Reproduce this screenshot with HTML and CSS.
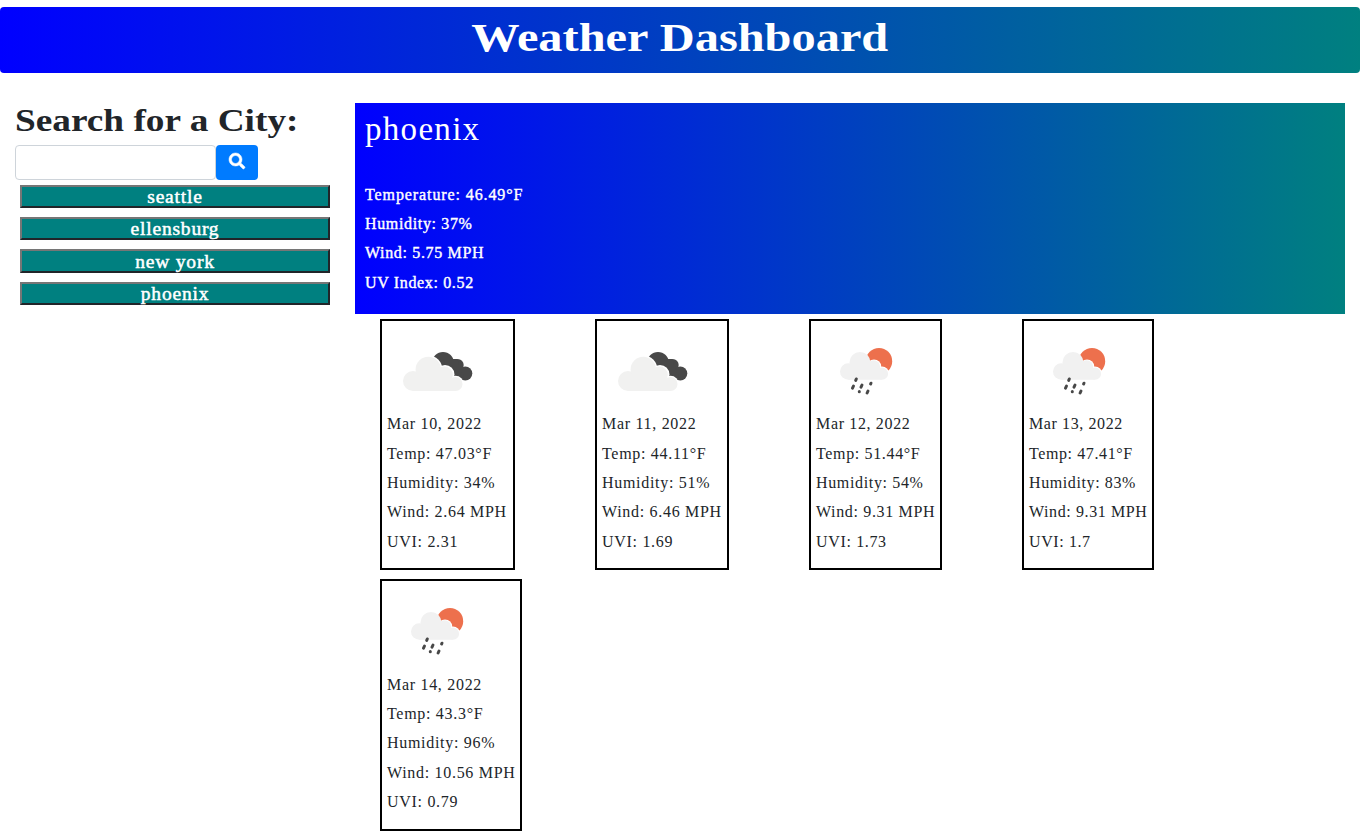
FILE: index.html
```html
<!DOCTYPE html>
<html lang="en">
<head>
<meta charset="utf-8">
<title>Weather Dashboard</title>
<link rel="stylesheet" href="styles.css">
</head>
<body>
<svg class="defs" aria-hidden="true">
  <symbol id="clouds" viewBox="0 0 98 98">
    <g fill="#484848">
      <circle cx="56" cy="39.700" r="10.800"/><circle cx="70.700" cy="42" r="6"/><circle cx="78.300" cy="50.500" r="7"/>
      <path d="M56 36h14l8 21H64z"/>
    </g>
    <g fill="#fff">
      <circle cx="41.300" cy="46.500" r="14"/><circle cx="58" cy="51.500" r="9.500"/><circle cx="68.500" cy="61" r="8.300"/>
    </g>
    <g fill="#f1f1f0">
      <circle cx="26" cy="58" r="10"/><circle cx="41.300" cy="46.500" r="12.700"/><circle cx="57.500" cy="51.800" r="8.300"/><circle cx="68.500" cy="61" r="7"/>
      <path d="M26 68V52l20-6 16 8 6.500 14z"/>
    </g>
  </symbol>
  <symbol id="rain" viewBox="0 0 98 98">
    <circle cx="63" cy="38.200" r="13.200" fill="#ed704d"/>
    <g fill="#fff">
      <circle cx="58" cy="43.700" r="7.300"/><circle cx="66" cy="50.500" r="7"/>
    </g>
    <g fill="#f1f1f1">
      <circle cx="32.300" cy="48.500" r="8.300"/><circle cx="44" cy="39.500" r="10.500"/><circle cx="57.500" cy="43.900" r="6.700"/><circle cx="66" cy="50.700" r="6.100"/>
      <path d="M32.300 56.800V44l14-6 15 6 4.700 12.800z"/>
    </g>
    <g stroke="#484848" stroke-width="3" stroke-linecap="round">
      <path d="M40.300 56l-.6 1.400M37.500 63l-1 2.200M46 62l-1 2.200M43.300 68.500v.3M55 60.200l-.4.8M52 68l-.9 2"/>
    </g>
  </symbol>
</svg>
<header class="banner"><h1>Weather Dashboard</h1></header>
<div class="layout">
  <aside class="sidebar">
    <h2>Search for a City:</h2>
    <form class="search">
      <input type="text" aria-label="City">
      <button type="button" class="go" aria-label="Search">
        <svg viewBox="0 0 512 512"><path fill="#fff" stroke="#fff" stroke-width="16" d="M505 442.700L405.300 343c-4.500-4.500-10.600-7-17-7H372c27.600-35.300 44-79.700 44-128C416 93.100 322.900 0 208 0S0 93.100 0 208s93.100 208 208 208c48.300 0 92.700-16.400 128-44v16.300c0 6.400 2.500 12.500 7 17l99.700 99.700c9.400 9.400 24.600 9.400 33.900 0l28.300-28.300c9.400-9.400 9.400-24.600.1-34zM208 336c-70.700 0-128-57.200-128-128 0-70.700 57.200-128 128-128 70.700 0 128 57.200 128 128 0 70.700-57.200 128-128 128z"/></svg>
      </button>
    </form>
    <div class="cities">
      <button type="button">seattle</button>
      <button type="button">ellensburg</button>
      <button type="button">new york</button>
      <button type="button">phoenix</button>
    </div>
  </aside>
  <main class="content">
    <section class="current">
      <h3>phoenix</h3>
      <p class="temp">Temperature: 46.49°F</p>
      <p>Humidity: 37%</p>
      <p>Wind: 5.75 MPH</p>
      <p>UV Index: 0.52</p>
    </section>
    <section class="forecast">
      <article class="day w1"><svg><use href="#clouds"/></svg><p>Mar 10, 2022</p><p>Temp: 47.03°F</p><p>Humidity: 34%</p><p>Wind: 2.64 MPH</p><p>UVI: 2.31</p></article>
      <article class="day w2"><svg><use href="#clouds"/></svg><p>Mar 11, 2022</p><p>Temp: 44.11°F</p><p>Humidity: 51%</p><p>Wind: 6.46 MPH</p><p>UVI: 1.69</p></article>
      <article class="day w3"><svg><use href="#rain"/></svg><p>Mar 12, 2022</p><p>Temp: 51.44°F</p><p>Humidity: 54%</p><p>Wind: 9.31 MPH</p><p>UVI: 1.73</p></article>
      <article class="day w4"><svg><use href="#rain"/></svg><p>Mar 13, 2022</p><p>Temp: 47.41°F</p><p>Humidity: 83%</p><p>Wind: 9.31 MPH</p><p>UVI: 1.7</p></article>
      <article class="day w5"><svg><use href="#rain"/></svg><p>Mar 14, 2022</p><p>Temp: 43.3°F</p><p>Humidity: 96%</p><p>Wind: 10.56 MPH</p><p>UVI: 0.79</p></article>
    </section>
  </main>
</div>
</body>
</html>
```
FILE: styles.css
```css
* { box-sizing: border-box; }
body {
  margin: 0;
  padding-top: 7.400px;
  background: #fff;
  color: #212529;
  font-family: "Liberation Serif", serif;
  font-size: 16px;
  overflow: hidden;
}
h1, h2, h3, p { margin: 0; white-space: nowrap; }
.defs { display: none; }
.banner {
  display: flex;
  justify-content: center;
  height: 66px;
  border-radius: 4px;
  background: linear-gradient(to right, blue, teal);
  color: #fff;
}
.banner h1 {
  font: bold 41px/60px "Liberation Serif", serif;
  transform: scaleX(1.18);
}
.layout { display: flex; padding-top: 29.400px; }
.sidebar { width: 340px; padding: 0 10px 0 15px; }
.sidebar h2 {
  width: 240px;
  font: bold 31px/36px "Liberation Serif", serif;
  transform: scaleX(1.203);
  transform-origin: left;
}
.search { display: flex; margin-top: 6px; height: 35px; }
.search input {
  width: 201px;
  border: 1px solid #ced4da;
  border-radius: 4px;
}
.go {
  width: 42px;
  padding: 0 0 2px;
  border: 0;
  border-radius: 4px;
  background: #007bff;
  display: flex;
  align-items: center;
  justify-content: center;
}
.go svg { width: 16px; height: 16px; overflow: visible; }
.cities {
  display: flex;
  flex-direction: column;
  gap: 9px;
  padding: 5px 0 0 5px;
}
.cities button {
  height: 23.300px;
  width: 310px;
  padding: 0;
  border: 2px solid;
  border-color: #767676 #212529 #212529 #767676;
  background: teal;
  color: #fff;
  font: 19.500px/19px "Liberation Serif", serif;
  letter-spacing: .8px;
  -webkit-text-stroke: .5px #fff;
}
.content { width: 990px; margin-left: 15px; }
.current {
  height: 211.300px;
  padding: 6px 10px;
  background: linear-gradient(to right, blue, teal);
  color: #fff;
  letter-spacing: .65px;
}
.current h3 {
  margin-bottom: 31px;
  font-size: 33px;
  font-weight: normal;
  line-height: 40px;
  letter-spacing: 1.300px;
}
.current p { line-height: 29.330px; -webkit-text-stroke: .4px #fff; }
.current .temp { letter-spacing: .9px; }
.forecast {
  display: flex;
  flex-wrap: wrap;
  gap: 9px 80px;
  padding: 5px 0 0 25px;
}
.day {
  height: 251.300px;
  padding: 2px 5px;
  border: 2px solid #000;
  letter-spacing: .7px;
}
.day svg { display: block; width: 98px; height: 98px; margin-bottom: -11.700px; }
.day p { line-height: 29.330px; }
.w1 { width: 135px; }
.w2 { width: 134px; }
.w3 { width: 133px; letter-spacing: .65px; }
.w4 { width: 132px; letter-spacing: .6px; }
.w5 { width: 142px; }
```
